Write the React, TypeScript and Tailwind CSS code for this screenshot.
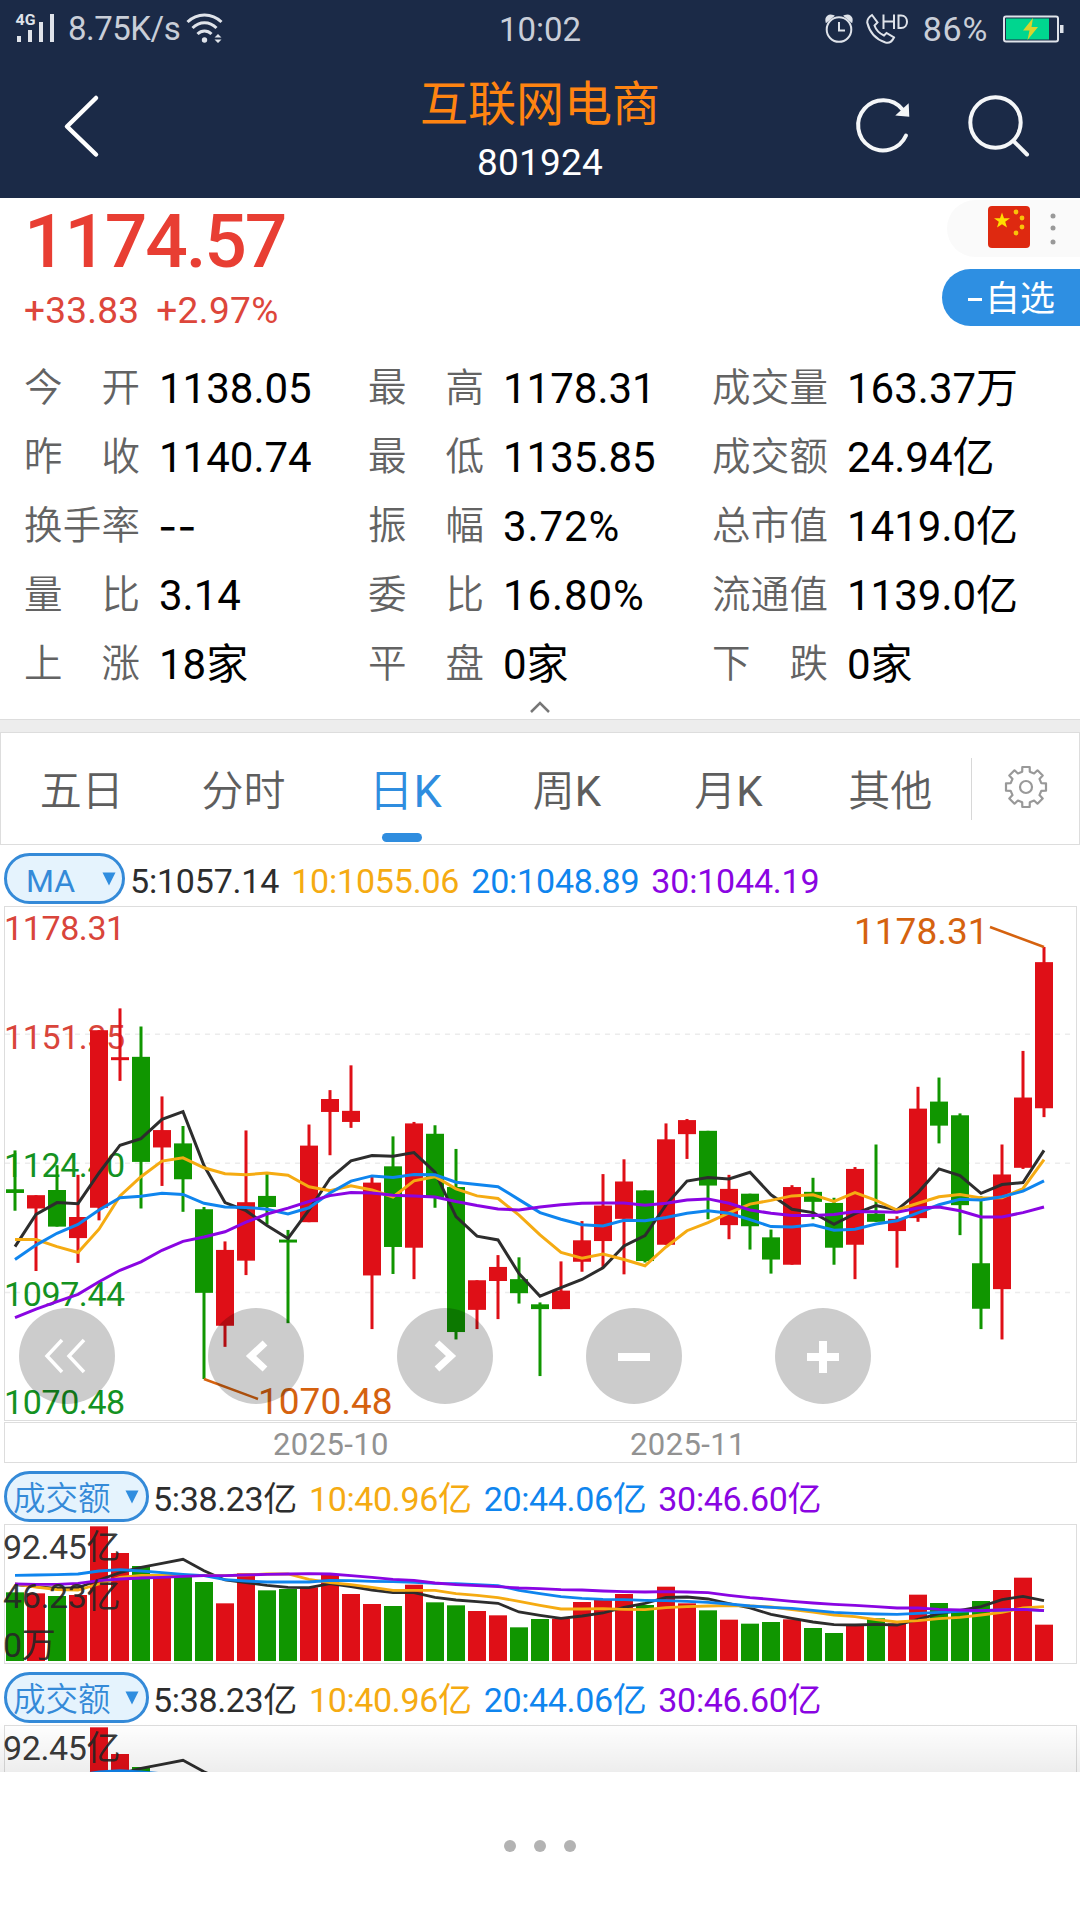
import React from 'react';

const FONT = "font-[Roboto,'Noto_Sans_CJK_SC',sans-serif]";

const RED = '#df0f17';
const GREEN = '#109600';
const BLACK = '#2d2d2d';
const ORANGE = '#f5ab12';
const BLUE = '#0f85ee';
const PURPLE = '#8a05e2';

// [colour, body top, body bottom, high, low] in plot units
type Candle = ['r' | 'g', number, number, number, number];

const candles: Candle[] = [
  ['g', 782, 792, 677, 840],
  ['r', 798, 834, 798, 1003],
  ['g', 784, 883, 717, 883],
  ['r', 857, 914, 743, 981],
  ['r', 352, 832, 352, 866],
  ['r', 425, 433, 293, 489],
  ['g', 424, 708, 342, 834],
  ['r', 622, 669, 531, 773],
  ['g', 658, 755, 611, 843],
  ['g', 836, 1062, 830, 1295],
  ['r', 946, 1151, 923, 1208],
  ['r', 817, 975, 623, 1014],
  ['g', 800, 830, 740, 877],
  ['g', 918, 926, 892, 1144],
  ['r', 664, 871, 607, 871],
  ['r', 538, 573, 514, 690],
  ['r', 570, 600, 447, 616],
  ['r', 764, 1015, 745, 1160],
  ['g', 720, 938, 639, 1011],
  ['r', 604, 940, 600, 1025],
  ['g', 632, 805, 609, 832],
  ['g', 776, 1168, 673, 1188],
  ['r', 1028, 1108, 1028, 1160],
  ['r', 992, 1030, 960, 1133],
  ['g', 1025, 1063, 966, 1091],
  ['g', 1093, 1106, 1088, 1287],
  ['r', 1056, 1106, 977, 1106],
  ['r', 920, 978, 868, 1005],
  ['r', 826, 922, 741, 992],
  ['r', 761, 862, 701, 1012],
  ['g', 785, 976, 785, 980],
  ['r', 647, 932, 604, 932],
  ['r', 595, 633, 592, 700],
  ['g', 624, 772, 624, 863],
  ['r', 781, 879, 743, 917],
  ['g', 794, 882, 794, 945],
  ['g', 912, 972, 891, 1010],
  ['r', 776, 986, 771, 986],
  ['g', 789, 816, 751, 863],
  ['g', 819, 940, 805, 986],
  ['r', 727, 932, 722, 1025],
  ['g', 848, 870, 661, 870],
  ['r', 862, 895, 855, 994],
  ['r', 564, 860, 505, 870],
  ['g', 545, 610, 480, 658],
  ['g', 582, 825, 577, 906],
  ['g', 982, 1105, 801, 1160],
  ['r', 742, 1052, 661, 1188],
  ['r', 534, 724, 408, 727],
  ['r', 168, 563, 127, 587],
];

const priceLines = [
  {
    color: BLACK,
    values: [937, 850, 818, 821, 738, 663, 645, 593, 572, 718, 818, 840, 880, 915, 838, 753, 705, 691, 693, 683, 736, 856, 909, 919, 1010, 1071, 1048, 1026, 994, 935, 907, 824, 760, 750, 754, 736, 797, 836, 845, 877, 848, 826, 838, 791, 727, 745, 793, 769, 764, 677],
  },
  {
    color: ORANGE,
    values: [918, 918, 937, 953, 890, 800, 748, 706, 697, 724, 740, 743, 738, 744, 775, 786, 773, 784, 803, 759, 748, 781, 800, 807, 852, 905, 953, 968, 957, 972, 989, 938, 894, 872, 846, 822, 812, 800, 797, 815, 791, 812, 838, 820, 802, 796, 806, 805, 780, 702],
  },
  {
    color: BLUE,
    values: [972, 933, 901, 877, 838, 805, 801, 793, 796, 820, 830, 831, 836, 849, 832, 792, 760, 746, 750, 742, 743, 763, 769, 775, 810, 845, 863, 878, 881, 866, 867, 858, 847, 840, 847, 864, 883, 884, 878, 893, 890, 876, 867, 846, 824, 809, 811, 802, 787, 759],
  },
  {
    color: PURPLE,
    values: [1129, 1106, 1086, 1066, 1032, 1001, 978, 947, 923, 911, 897, 871, 849, 833, 815, 799, 791, 792, 798, 800, 803, 815, 826, 835, 838, 830, 824, 820, 819, 819, 825, 820, 811, 808, 820, 838, 847, 853, 853, 850, 842, 843, 844, 833, 830, 840, 857, 857, 845, 830],
  },
];

const volumes = [397, 400, 408, 405, 199, 279, 318, 350, 350, 366, 430, 340, 391, 387, 382, 342, 402, 432, 438, 374, 427, 436, 453, 466, 502, 477, 476, 426, 420, 402, 435, 380, 430, 451, 479, 491, 486, 478, 504, 519, 498, 475, 490, 404, 429, 450, 423, 390, 353, 494];

const volumeLines = [
  {
    color: BLACK,
    values: [374, 380, 385, 383, 360, 338, 322, 310, 298, 332, 360, 368, 376, 382, 383, 371, 380, 390, 398, 398, 412, 420, 425, 430, 456, 466, 475, 468, 459, 442, 430, 412, 411, 417, 431, 444, 463, 475, 486, 494, 495, 493, 495, 478, 461, 451, 440, 419, 409, 422],
  },
  {
    color: ORANGE,
    values: [372, 381, 389, 390, 372, 352, 346, 346, 346, 347, 347, 345, 342, 342, 358, 368, 374, 382, 391, 391, 391, 401, 406, 413, 424, 436, 447, 447, 446, 448, 449, 443, 440, 438, 437, 438, 441, 449, 456, 465, 470, 479, 486, 482, 476, 472, 465, 457, 444, 440],
  },
  {
    color: BLUE,
    values: [346, 345, 344, 342, 333, 329, 333, 338, 343, 347, 359, 363, 366, 366, 366, 361, 362, 364, 365, 367, 370, 371, 374, 377, 391, 401, 410, 415, 418, 419, 421, 422, 424, 427, 432, 438, 442, 445, 451, 457, 460, 462, 463, 460, 457, 454, 452, 450, 448, 452],
  },
  {
    color: PURPLE,
    values: [372, 373, 373, 370, 362, 357, 354, 352, 349, 347, 347, 345, 343, 342, 341, 342, 347, 352, 358, 361, 369, 374, 377, 380, 384, 386, 389, 390, 393, 395, 396, 395, 396, 398, 406, 413, 418, 424, 429, 433, 436, 440, 444, 444, 448, 450, 452, 450, 448, 452],
  },
];

const toX = (i: number) => 15 + i * 21;
const priceY = (v: number) => v * 0.3699 - 5;
const volumeY = (v: number) => v / 3 - 64;

const toPoints = (values: number[], toY: (v: number) => number) =>
  values.map((v, i) => `${toX(i)},${toY(v).toFixed(1)}`).join(' ');

const StatusBar = () => (
  <div className="grid h-[57px] grid-cols-3 items-center pl-4 pr-4 text-[33px] leading-none text-[#c9ced8]">
    <div className="flex items-center">
      <svg className="overflow-visible" width="40" height="32" viewBox="0 0 40 32" fill="#dfe3ea">
        <text x="-0.500" y="12" fontSize="15" fontWeight="700" textLength="20" lengthAdjust="spacingAndGlyphs">4G</text>
        <rect x="1" y="23" width="4" height="6" />
        <rect x="12" y="17" width="4" height="12" />
        <rect x="23" y="9" width="4" height="20" />
        <rect x="34" y="1" width="4" height="28" />
      </svg>
      <span className="ml-[12px] tracking-[-0.5px]">8.75K/s</span>
      <svg className="ml-[6px]" width="38" height="32" viewBox="0 0 38 32" fill="none" stroke="#dfe3ea" strokeWidth="3">
        <path d="M1.5 9 C11 -0.5 26 -0.5 35.5 9" />
        <path d="M6.5 15 C13.5 8 23.500 8 30.500 15" />
        <path d="M11.500 21 C15.500 17 21.500 17 25.500 21" />
        <circle cx="18.500" cy="27" r="2.700" fill="#dfe3ea" stroke="none" />
        <path d="M28.500 24.500 L32 21 L35.500 24.500 Z M28.500 26.500 L32 30 L35.500 26.500 Z" fill="#dfe3ea" stroke="none" />
      </svg>
    </div>
    <div className="pt-[2px] text-center">10:02</div>
    <div className="flex items-center justify-end">
      <svg width="30" height="32" viewBox="0 0 30 32" fill="none" stroke="#dfe3ea" strokeWidth="2">
        <circle cx="15" cy="16.500" r="12.300" />
        <path d="M15 9 V17.500 H21" />
        <path d="M2.500 8.500 C1.500 4 5 1.500 9 3 Z M27.500 8.500 C28.500 4 25 1.500 21 3 Z" fill="#dfe3ea" />
      </svg>
      <svg className="ml-[12px]" width="42" height="32" viewBox="0 0 42 32" fill="none" stroke="#dfe3ea" strokeWidth="2">
        <path d="M6 2 L11.500 9.500 L8.500 12.500 C10 17 13.500 20.500 18 22.500 L20.500 20 L28 24.500 C26 28.500 23 30.500 19.500 29.500 C10 26.500 3.500 19 1.200 9.500 C1.200 6 3.500 3.500 6 2 Z" />
        <path d="M17.500 1.500 V16 M28 1.500 V16 M17.500 8.500 H28 M32.500 2.500 H35 C43 2.500 43 15 35 15 H32.500 Z" />
      </svg>
      <span className="ml-[15px] text-[34px] tracking-[0.700px]">86%</span>
      <svg className="ml-[15px]" width="61" height="28" viewBox="0 0 61 28" fill="none">
        <rect x="1" y="1.500" width="54" height="25" rx="2" stroke="#dfe3ea" strokeWidth="2" />
        <rect x="3" y="3.500" width="43" height="21" fill="#00d68f" />
        <rect x="57" y="10" width="3.500" height="8" fill="#dfe3ea" />
        <path d="M30 3 L20 15.500 H26.500 L24.500 25 L35 12 H28.500 Z" fill="#d8d32c" />
      </svg>
    </div>
  </div>
);

const TitleBar = () => (
  <div className="flex h-[141px] items-start justify-between pl-[60px] pr-[48px]">
    <div className="w-[170px] pt-[36px]">
      <svg width="40" height="68" viewBox="0 0 40 68" fill="none" stroke="#ffffff" strokeWidth="4.500" strokeLinecap="round" strokeLinejoin="round">
        <path d="M36 5 L7 33.500 L36 61.500" />
      </svg>
    </div>
    <div className="flex flex-col items-center pt-[21px]">
      <h1 className="text-[48px] font-normal leading-[54px] text-[#ff8411]">互联网电商</h1>
      <p className="mt-[11px] text-[37px] leading-[40px] tracking-[0.200px] text-white">801924</p>
    </div>
    <div className="flex w-[182px] justify-between pt-[36px]">
      <svg className="ml-[3px]" width="60" height="68" viewBox="0 0 60 68" fill="none" stroke="#f4f6f8" strokeWidth="4" strokeLinecap="round">
        <path d="M53 42.500 A25 25 0 1 1 49.500 16.500" />
        <path d="M55 12 L55.500 23 L44 22 Z" fill="#f4f6f8" strokeWidth="1.500" />
      </svg>
      <svg width="66" height="68" viewBox="0 0 66 68" fill="none" stroke="#f4f6f8" strokeWidth="4" strokeLinecap="round">
        <circle cx="29.500" cy="29.500" r="25.200" />
        <path d="M47.500 48 L61 61.500" />
      </svg>
    </div>
  </div>
);

const FlagIcon = () => (
  <svg className="mb-[3px]" width="42" height="42" viewBox="0 0 42 42">
    <rect width="42" height="42" rx="4" fill="#de2910" />
    <path d="M14 6.500 L16 12.200 H22 L17.200 15.800 L19 21.500 L14 18.200 L9 21.500 L10.800 15.800 L6 12.200 H12 Z" fill="#ffde00" />
    <g fill="#f9c20a">
      <circle cx="28" cy="6" r="2.400" />
      <circle cx="34" cy="12" r="2.400" />
      <circle cx="34" cy="21" r="2.400" />
      <circle cx="28" cy="27" r="2.400" />
    </g>
  </svg>
);

const quoteRows = [
  [['今', '开'], '1138.05', ['最', '高'], '1178.31', ['成', '交', '量'], '163.37万'],
  [['昨', '收'], '1140.74', ['最', '低'], '1135.85', ['成', '交', '额'], '24.94亿'],
  [['换', '手', '率'], '--', ['振', '幅'], '3.72%', ['总', '市', '值'], '1419.0亿'],
  [['量', '比'], '3.14', ['委', '比'], '16.80%', ['流', '通', '值'], '1139.0亿'],
  [['上', '涨'], '18家', ['平', '盘'], '0家', ['下', '跌'], '0家'],
];

const QuoteValue = ({ value }: { value: string }) => {
  if (value === '--') {
    return <span className="ml-[17px] font-[Inter,sans-serif] text-[42px] leading-none text-black">--</span>;
  }
  if (value.endsWith('%')) {
    return <span className="ml-[18px] text-[42px] leading-none tracking-[0.900px] text-black">{value}</span>;
  }
  return <span className="ml-[18px] text-[42px] leading-none text-black">{value}</span>;
};

const QuotePanel = () => (
  <section className="flex h-[521px] flex-col">
    <div className="flex h-[156px] justify-between">
      <div className="pl-[24px] text-[#e83e33]">
        <div className="pt-[7px] text-[75px] font-medium leading-[72px] tracking-[-2.200px]">1174.57</div>
        <div className="mt-[14px] flex gap-[17px] text-[37px] leading-[40px] tracking-[0.200px] text-[#dd463b]">
          <span>+33.83</span>
          <span className="tracking-[0.400px]">+2.97%</span>
        </div>
      </div>
      <div className="flex flex-col items-end">
        <div className="mt-[2px] flex h-[57px] w-[133px] items-center rounded-l-full bg-[#fafafa] pl-[41px]">
          <FlagIcon />
          <svg className="mb-[2px] ml-[18px]" width="10" height="34" viewBox="0 0 10 34" fill="#999999">
            <circle cx="5" cy="5" r="2.500" />
            <circle cx="5" cy="17" r="2.500" />
            <circle cx="5" cy="31" r="2.500" />
          </svg>
        </div>
        <button className="mt-[12px] flex h-[57px] w-[138px] items-center rounded-l-full bg-[#2e8fe2] pl-[26px] pt-[4px] text-[35px] leading-none text-white">
          <span className="mr-[3px] h-[3px] w-[14px] bg-white" />
          自选
        </button>
      </div>
    </div>
    <div>
      {quoteRows.map((row, r) => (
        <div key={r} className="grid h-[69px] grid-cols-[344px_344px_1fr] pl-[24px]">
          {[0, 2, 4].map((c) => (
            <div key={c} className="flex items-center">
              <div className="flex w-[116px] justify-between text-[38.5px] font-[350] leading-none text-[#636363]">
                {(row[c] as string[]).map((ch) => (
                  <span key={ch}>{ch}</span>
                ))}
              </div>
              <span className="w-px" />
              <QuoteValue value={row[c + 1] as string} />
            </div>
          ))}
        </div>
      ))}
    </div>
    <div className="flex justify-center">
      <svg width="24" height="16" viewBox="0 0 24 16" fill="none" stroke="#777777" strokeWidth="2.500">
        <path d="M3 13 L12 4 L21 13" />
      </svg>
    </div>
  </section>
);

const gearPath = (() => {
  const pts: string[] = [];
  for (let i = 0; i < 8; i++) {
    [[-14, 15.8], [-10.5, 20.3], [10.5, 20.3], [14, 15.8]].forEach(([deg, r]) => {
      const a = ((i * 45 + deg - 90) * Math.PI) / 180;
      pts.push(`${(23 + r * Math.cos(a)).toFixed(1)} ${(23 + r * Math.sin(a)).toFixed(1)}`);
    });
  }
  return `M${pts.join(' L')} Z`;
})();

const tabs = [
  { text: '五日' },
  { text: '分时' },
  { text: '日', suffix: 'K', active: true },
  { text: '周', suffix: 'K' },
  { text: '月', suffix: 'K' },
  { text: '其他' },
];

const PeriodTabs = () => (
  <nav className="flex h-[113px] border border-[#dddddd]">
    <div className="grid w-[970px] grid-cols-6">
      {tabs.map((tab) =>
        tab.active ? (
          <div key={tab.text} className="flex flex-col items-center text-[45px] leading-[50px] text-[#2f8ddf]">
            <span className="mt-[34px] font-[350]">
              {tab.text}
              <span className="font-normal">{tab.suffix}</span>
            </span>
            <span className="mr-[6px] mt-[16px] h-[9px] w-[40px] rounded-full bg-[#2f8ddf]" />
          </div>
        ) : (
          <div key={tab.text} className="pt-[34px] text-center text-[42px] font-[350] leading-[50px] text-[#5e5e5e]">
            {tab.text}
            {tab.suffix && <span className="font-normal">{tab.suffix}</span>}
          </div>
        ),
      )}
    </div>
    <div className="mt-[25px] h-[62px] w-px bg-[#d8d8d8]" />
    <div className="flex flex-1 justify-center pt-[31px]">
      <svg width="46" height="46" viewBox="0 0 46 46" fill="none" stroke="#999999" strokeWidth="2.200" strokeLinejoin="round">
        <path d={gearPath} />
        <circle cx="23" cy="23" r="6" />
      </svg>
    </div>
  </nav>
);

interface IndicatorRowProps {
  label: string;
  wide?: boolean;
  values: string[];
}

const IndicatorRow: React.FC<IndicatorRowProps> = ({ label, wide, values }) => (
  <div className="flex h-[61px] items-center pl-1 pt-[6px] text-[34px] leading-none">
    <div
      className={
        wide
          ? 'flex h-[51px] w-[145px] items-center justify-between rounded-full border-[3px] border-[#348ad8] bg-[#e5f3fd] pl-[6px] pr-[7px] text-[32.5px] font-[350] text-[#348ad8]'
          : 'flex h-[51px] w-[121px] items-center justify-between rounded-full border-[3px] border-[#348ad8] bg-[#e5f3fd] pl-[19px] pr-[6px] text-[32px] text-[#348ad8]'
      }
    >
      <span className="pt-[5px]">{label}</span>
      <svg width="14" height="14" viewBox="0 0 14 14" fill="#2f8ddf">
        <path d="M0.500 0.500 H13.500 L7 13.500 Z" />
      </svg>
    </div>
    <div
      className={
        wide
          ? 'ml-[4px] flex gap-[12px] pt-[5px] tracking-[-0.350px]'
          : 'ml-[5px] flex gap-[12px] pt-[5px] tracking-[-0.200px]'
      }
    >
      <span className="text-[#2d2d2d]">{values[0]}</span>
      <span className="text-[#f5ab12]">{values[1]}</span>
      <span className="text-[#0f85ee]">{values[2]}</span>
      <span className="text-[#8a05e2]">{values[3]}</span>
    </div>
  </div>
);

const priceLabels = [
  { text: '1178.31', y: 35, color: '#d9453b' },
  { text: '1151.35', y: 144, color: '#d9453b' },
  { text: '1124.40', y: 272, color: '#149222' },
  { text: '1097.44', y: 401, color: '#149222' },
  { text: '1070.48', y: 509, color: '#149222' },
];

const CandleChart = () => (
  <svg className="block" width="1080" height="517" viewBox="0 0 1080 517">
    <rect x="4.500" y="1.500" width="1072" height="514" fill="#ffffff" stroke="#dddddd" />
    {[363, 712, 1061].map((v) => (
      <line key={v} x1="5" x2="1071" y1={priceY(v)} y2={priceY(v)} stroke="#ececec" strokeWidth="1.500" strokeDasharray="5 5" />
    ))}
    {priceLabels.map((l) => (
      <text key={l.text} x="4" y={l.y} fontSize="34" letterSpacing="-0.400" fill={l.color}>{l.text}</text>
    ))}
    {candles.map(([c, top, bottom, high, low], i) => (
      <g key={i} fill={c === 'r' ? RED : GREEN}>
        <rect x={toX(i) - 1.5} y={priceY(high)} width="3" height={priceY(low) - priceY(high)} />
        <rect x={toX(i) - 9} y={priceY(top)} width="18" height={priceY(bottom) - priceY(top)} />
      </g>
    ))}
    {priceLines.map((l) => (
      <polyline key={l.color} points={toPoints(l.values, priceY)} fill="none" stroke={l.color} strokeWidth="3" />
    ))}
    <g stroke="#d5620f" strokeWidth="2.500">
      <line x1="990" y1="22" x2="1044" y2="42" />
      <line x1="204" y1="474" x2="258" y2="494" />
    </g>
    <g fill="#d5620f" fontSize="37">
      <text x="854" y="39">1178.31</text>
      <text x="258" y="509">1070.48</text>
    </g>
  </svg>
);

const controls = [
  <path key="first" d="M47 31 L32 47 L47 63 M69 31 L54 47 L69 63" strokeWidth="3.500" transform="translate(-4 1)" />,
  <path key="prev" d="M57 35 L43 48 L57 61" strokeWidth="7" />,
  <path key="next" d="M40 35 L54 48 L40 61" strokeWidth="7" />,
  <path key="minus" d="M32 49 H64" strokeWidth="8" />,
  <path key="plus" d="M32 49 H64 M48 33 V65" strokeWidth="8" />,
];

const ChartControls = () => (
  <div className="absolute left-[19px] top-[403px] flex gap-[93px]">
    {controls.map((icon, i) => (
      <button key={i} className="h-24 w-24 rounded-full bg-black/20">
        <svg width="96" height="96" viewBox="0 0 96 96" fill="none" stroke="#ffffff">
          {icon}
        </svg>
      </button>
    ))}
  </div>
);

interface VolumeChartProps {
  labels: { text: string; y: number }[];
}

const VolumeChart: React.FC<VolumeChartProps> = ({ labels }) => (
  <svg className="block" width="1080" height="140" viewBox="0 0 1080 140">
    <rect x="4.500" y="0.500" width="1072" height="139" fill="#ffffff" stroke="#dddddd" />
    {volumes.map((v, i) => (
      <rect key={i} x={toX(i) - 9} y={volumeY(v)} width="18" height={137 - volumeY(v)} fill={candles[i][0] === 'r' ? RED : GREEN} />
    ))}
    {volumeLines.map((l) => (
      <polyline key={l.color} points={toPoints(l.values, volumeY)} fill="none" stroke={l.color} strokeWidth="2.800" />
    ))}
    <g fill="#262626" fillOpacity="0.930" fontSize="34" letterSpacing="-0.400">
      {labels.map((l) => (
        <text key={l.text} x="3" y={l.y}>{l.text}</text>
      ))}
    </g>
  </svg>
);

const maValues = ['5:1057.14', '10:1055.06', '20:1048.89', '30:1044.19'];
const amountValues = ['5:38.23亿', '10:40.96亿', '20:44.06亿', '30:46.60亿'];

const amountLabels = [
  { text: '92.45亿', y: 35 },
  { text: '46.23亿', y: 84 },
  { text: '0万', y: 133 },
];

const App: React.FC = () => {
  return (
    <div className={`${FONT} flex h-[1920px] w-[1080px] flex-col overflow-hidden bg-white`}>
      <header className="h-[198px] shrink-0 bg-[#1b2a47]">
        <StatusBar />
        <TitleBar />
      </header>

      <main className="relative h-[1574px] shrink-0 overflow-hidden">
        <QuotePanel />
        <div className="h-[13px] border-t border-[#dddddd] bg-[#ededed]" />
        <PeriodTabs />
        <IndicatorRow label="MA" values={maValues} />
        <div className="relative -mt-px">
          <CandleChart />
          <ChartControls />
        </div>
        {/* Date axis */}
        <div className="ml-1 mr-[3px] flex h-[41px] items-center border border-[#dddddd] pl-[268px] pt-[3px] text-[31px] leading-none text-[#929292]">
          <span className="w-[357px] tracking-[0.400px]">2025-10</span>
          <span className="tracking-[0.400px]">2025-11</span>
        </div>
        <IndicatorRow label="成交额" wide values={amountValues} />
        <VolumeChart labels={amountLabels} />
        <IndicatorRow label="成交额" wide values={amountValues} />
        <VolumeChart labels={amountLabels.slice(0, 1)} />
        <div className="absolute inset-x-0 bottom-0 h-[50px] bg-gradient-to-b from-black/0 to-black/[0.070]" />
      </main>

      <footer className="flex h-[148px] items-center justify-center gap-[18px]">
        <span className="h-3 w-3 rounded-full bg-[#b3b3b3]" />
        <span className="h-3 w-3 rounded-full bg-[#b3b3b3]" />
        <span className="h-3 w-3 rounded-full bg-[#b3b3b3]" />
      </footer>
    </div>
  );
};

export default App;
